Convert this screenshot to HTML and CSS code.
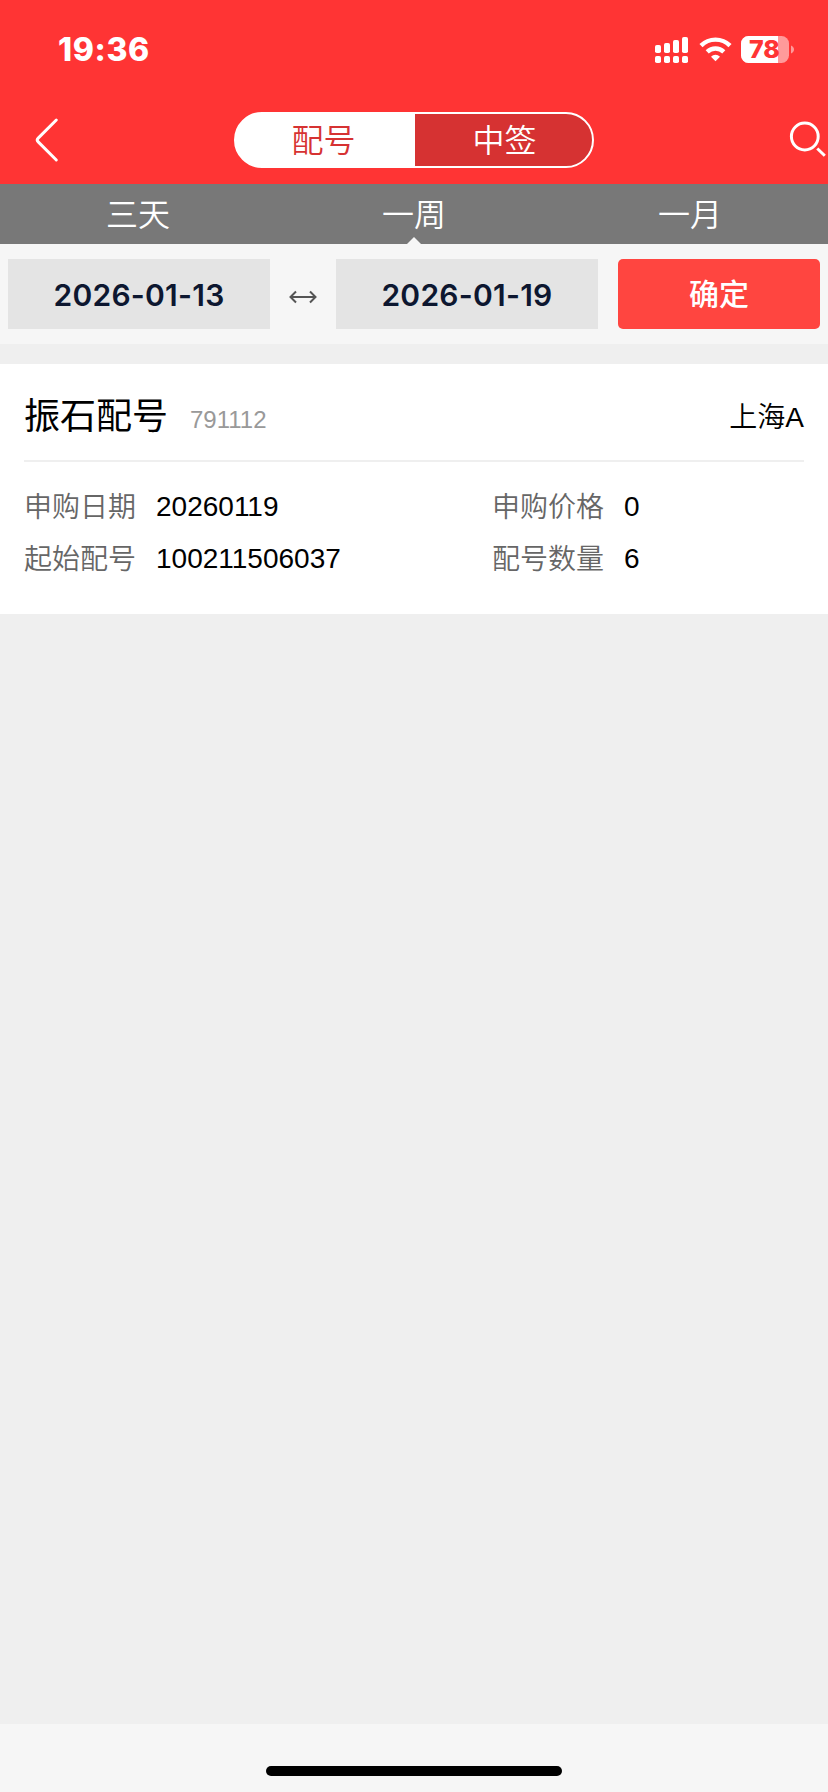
FILE: index.html
```html
<!DOCTYPE html>
<html lang="zh-CN">
<head>
<meta charset="utf-8">
<title>配号</title>
<link rel="stylesheet" href="styles.css">
</head>
<body>
<div class="screen">
  <header class="header">
    <div class="status">
      <span class="time">19:36</span>
      <svg class="status-icons" width="140" height="32" viewBox="655 34 140 32" fill="#fff">
        <rect x="655" y="45" width="6" height="8" rx="1.8"/>
        <rect x="664" y="43" width="6" height="10" rx="1.8"/>
        <rect x="673" y="40" width="6" height="13" rx="1.8"/>
        <rect x="682" y="37" width="6" height="16" rx="1.8"/>
        <rect x="655" y="56" width="6" height="7" rx="1.8"/>
        <rect x="664" y="56" width="6" height="7" rx="1.8"/>
        <rect x="673" y="56" width="6" height="7" rx="1.8"/>
        <rect x="682" y="56" width="6" height="7" rx="1.8"/>
        <path d="M701 45.600a20.500 20.500 0 0 1 29 0M707.200 51.900a11.900 11.900 0 0 1 16.600 0" fill="none" stroke="#fff" stroke-width="4.400"/>
        <path d="M715.500 61.200l-4.500-4.500a6.400 6.400 0 0 1 9 0z"/>
        <rect x="741" y="36" width="48" height="27" rx="7.500" fill="#ff9a9a"/>
        <path d="M748.500 36H778V63H748.500a7.500 7.500 0 0 1-7.500-7.500V43.500a7.500 7.500 0 0 1 7.500-7.500z"/>
        <path d="M791 45.500c4 1.500 4 6.500 0 8z" fill="#ff9a9a"/>
        <text class="battery-text" x="764.500" y="58" text-anchor="middle">78</text>
      </svg>
    </div>
    <nav class="nav">
      <svg class="back" width="30" height="50" viewBox="32 115 30 50" fill="none" stroke="#fff" stroke-width="3" stroke-linecap="round" stroke-linejoin="round"><path d="M56.300 120L38.200 138.100q-1.900 1.900 0 3.800L56.300 160"/></svg>
      <div class="segment"><span class="seg active">配号</span><span class="seg">中签</span></div>
      <svg class="search" width="40" height="40" viewBox="788 120 40 40" fill="none" stroke="#fff" stroke-width="3"><circle cx="804.800" cy="136.500" r="13.400"/><path d="M817.300 148.500l7.500 7.300"/></svg>
    </nav>
  </header>
  <div class="tabs"><span class="tab">三天</span><span class="tab current">一周</span><span class="tab">一月</span></div>
  <div class="filter">
    <div class="date">2026-01-13</div>
    <svg class="arrow" width="28" height="14" viewBox="0 0 28 14" fill="none" stroke="#555" stroke-width="2"><path d="M1.500 7h25M7 1.500L1.500 7 7 12.500M21 1.500L26.500 7 21 12.500"/></svg>
    <div class="date">2026-01-19</div>
    <div class="confirm">确定</div>
  </div>
  <main class="content">
    <section class="card">
      <div class="card-head"><span class="name">振石配号</span><span class="code">791112</span><span class="market">上海A</span></div>
      <div class="details">
        <div class="item"><span class="label">申购日期</span><span class="value">20260119</span></div>
        <div class="item"><span class="label">申购价格</span><span class="value">0</span></div>
        <div class="item"><span class="label">起始配号</span><span class="value">100211506037</span></div>
        <div class="item"><span class="label">配号数量</span><span class="value">6</span></div>
      </div>
    </section>
  </main>
  <footer class="footer"><div class="home-bar"></div></footer>
</div>
</body>
</html>
```
FILE: styles.css
```css
* { box-sizing: border-box; }
body { margin: 0; }
.screen {
  width: 828px;
  height: 1792px;
  display: flex;
  flex-direction: column;
  background: #efefef;
  font-family: "Liberation Sans", "Noto Sans CJK SC", sans-serif;
  color: #000;
  overflow: hidden;
}
.header { height: 184px; background: #ff3434; color: #fff; }
.status {
  height: 96px;
  padding: 4px 33px 0 58px;
  display: flex;
  align-items: center;
  justify-content: space-between;
}
.time { font: 800 32px/40px Inter, sans-serif; letter-spacing: 0.6px; }
.status-icons { display: block; }
.battery-text { font: 800 25px Inter, sans-serif; fill: #ff3434; }
.nav {
  height: 88px;
  padding-left: 32px;
  display: flex;
  align-items: center;
}
.segment {
  width: 360px;
  height: 56px;
  margin-left: 172px;
  display: flex;
  border: 2px solid #fff;
  border-radius: 28px;
  background: linear-gradient(to right, #fff 179px, #d63232 179px);
}
.search { margin-left: auto; }
.seg {
  flex: 1;
  font-size: 32px;
  line-height: 54px;
  font-weight: 350;
  text-align: center;
}
.seg.active { flex: 0 0 177px; margin-right: 4px; padding-right: 2px; color: #d63232; }
.tabs { height: 60px; display: flex; background: #787878; color: #fff; }
.tab {
  flex: 1;
  position: relative;
  font-size: 32px;
  line-height: 63px;
  height: 60px;
  font-weight: 350;
  text-align: center;
}
.tab.current::after {
  content: "";
  position: absolute;
  left: 50%;
  bottom: 0;
  margin-left: -7px;
  border: 7px solid transparent;
  border-top: 0;
  border-bottom-color: #f6f6f6;
}
.filter {
  height: 100px;
  padding: 0 8px;
  display: flex;
  align-items: center;
  background: #f6f6f6;
}
.date {
  width: 262px;
  height: 70px;
  background: #e4e4e4;
  color: #0d1730;
  font: 600 30px/72px Inter, sans-serif;
  letter-spacing: 0.25px;
  text-align: center;
}
.arrow { margin: 6px 19px 0; }
.confirm {
  width: 202px;
  height: 70px;
  margin-left: 20px;
  border-radius: 5px;
  background: #ff4540;
  color: #fff;
  font-size: 30px;
  font-weight: 500;
  line-height: 72px;
  text-align: center;
}
.content { flex: 1; padding-top: 20px; }
.card { height: 250px; padding: 0 24px; background: #fff; }
.card-head {
  height: 98px;
  display: flex;
  align-items: center;
  border-bottom: 2px solid #efefef;
}
.name { font-size: 36px; padding-top: 2px; }
.code { margin: 16px 0 0 22px; font-size: 24px; color: #999; }
.market { margin: 6px 0 0 auto; font-size: 28px; font-weight: 350; }
.details {
  padding-top: 18px;
  display: grid;
  grid-template-columns: 468px 1fr;
  grid-auto-rows: 52px;
}
.item { display: flex; align-items: center; gap: 20px; font-size: 28px; }
.label { color: #666; margin-top: -2px; font-weight: 350; }
.value { padding-top: 2px; }
.footer { height: 68px; padding-top: 42px; background: #f6f6f6; }
.home-bar { width: 296px; height: 10px; margin: 0 auto; border-radius: 5px; background: #000; }
```
